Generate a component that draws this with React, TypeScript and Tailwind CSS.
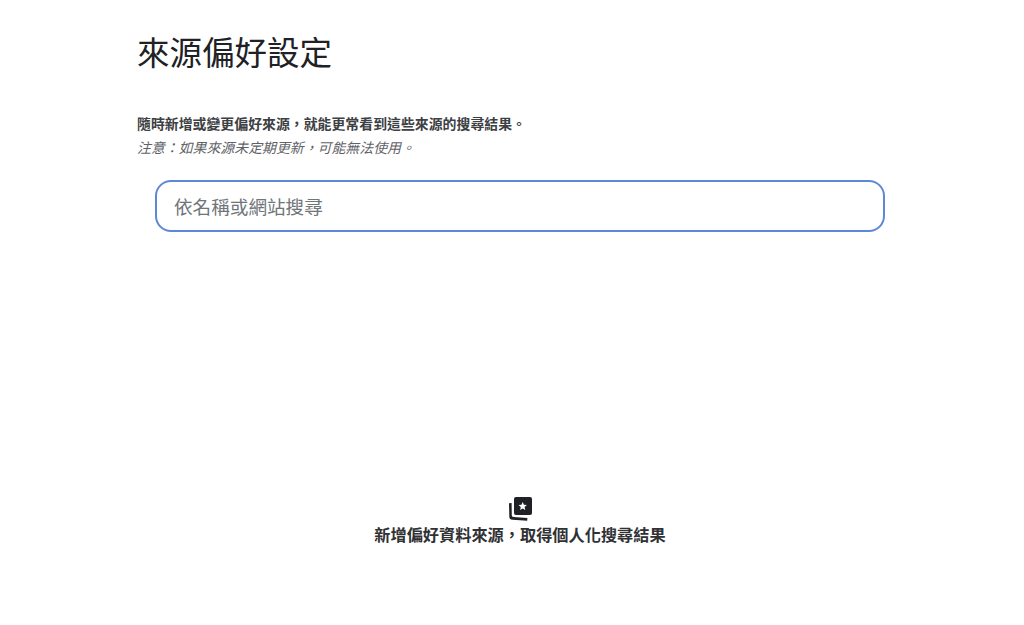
import React from 'react';

const font = { fontFamily: '"Liberation Sans", "Noto Sans CJK TC", sans-serif' };

// full-width punctuation, as in the reference
const comma = '\uFF0C';
const colon = '\uFF1A';

function SourcesIcon() {
  return (
    <svg width="26" height="26" viewBox="0 0 26 26" className="block translate-x-[1px]">
      <path d="M8 1h14a2 2 0 0 1 2 2v14a2 2 0 0 1-2 2H8a2 2 0 0 1-2-2V3a2 2 0 0 1 2-2z" fill="#202124" />
      <path d="M1 7.2l2.6-.3.2 12.4c0 1 .7 1.7 1.7 1.8l13.9 1-.2 2.6-14.6-1A3.5 3.5 0 0 1 1.3 20z" fill="#202124" />
      <path d="M14.7 6l1.2 2.8 3 .2-2.3 2 .7 3-2.6-1.6-2.6 1.6.7-3-2.3-2 3-.2z" fill="#ffffff" />
    </svg>
  );
}

export default function App() {
  return (
    <div className="w-[1024px] h-[625px] bg-white overflow-hidden text-[#202124]" style={font}>
      <div className="w-[748px] ml-[137px] flex flex-col">
        <h1 className="pt-[34px] text-[32.5px] leading-[40px] font-normal">來源偏好設定</h1>
        <p className="mt-[38px] text-[13.9px] leading-[24px] font-bold text-[#3c4043]">
          {`隨時新增或變更偏好來源${comma}就能更常看到這些來源的搜尋結果。`}
        </p>
        <p className="text-[13.9px] leading-[24px] italic text-[#5f6368]">
          {`注意${colon}如果來源未定期更新${comma}可能無法使用。`}
        </p>
        <div className="mt-[20px] ml-[18px] w-[730px] h-[52px] border-2 border-[#5f87d8] rounded-[16px] flex items-center pl-[17px] pt-[3px] text-[18.6px] text-[#70757a]">
          依名稱或網站搜尋
        </div>
      </div>
      <div className="mt-[264px] flex flex-col items-center ml-[16px]">
        <SourcesIcon />
        <p className="mt-[1px] text-[16.2px] leading-[24px] font-bold text-[#303134]">
          {`新增偏好資料來源${comma}取得個人化搜尋結果`}
        </p>
      </div>
    </div>
  );
}
